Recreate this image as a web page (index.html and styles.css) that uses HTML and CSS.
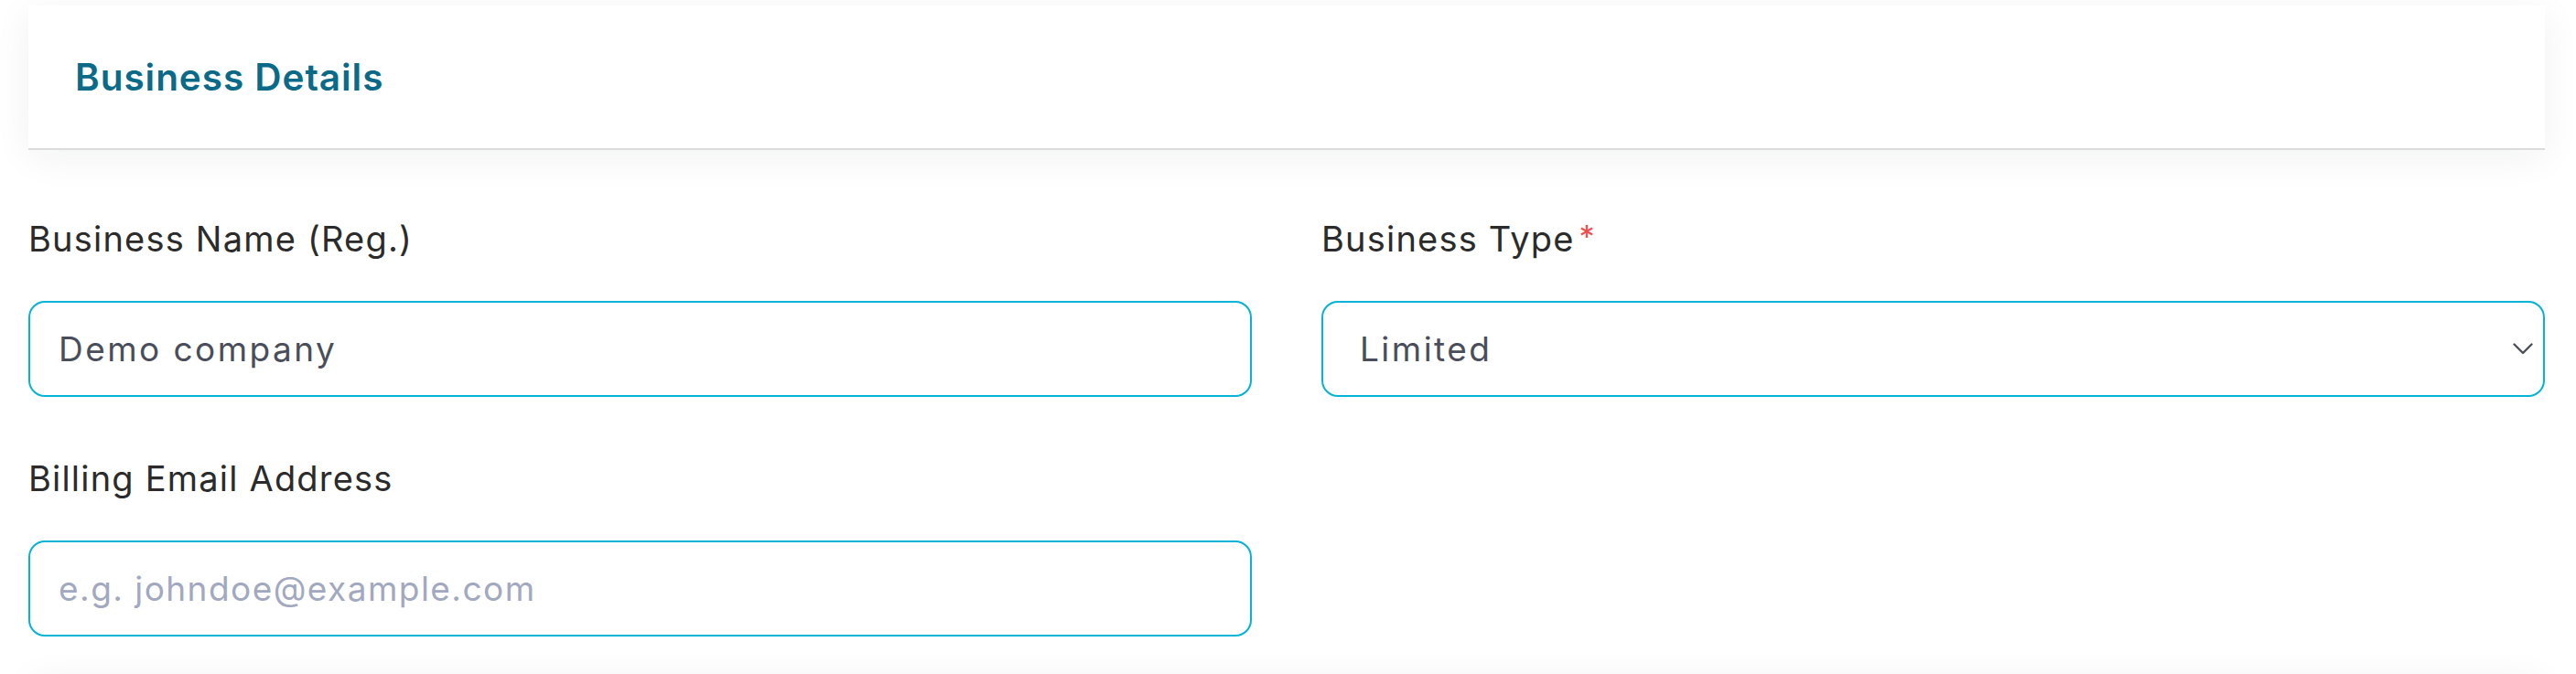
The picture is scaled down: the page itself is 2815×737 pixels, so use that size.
FILE: index.html
```html
<!DOCTYPE html>
<html lang="en">
<head>
<meta charset="utf-8">
<title>Business Details</title>
<link rel="stylesheet" href="styles.css">
</head>
<body>
<div class="page">
  <section class="card-header">
    <h2 class="title">Business Details</h2>
  </section>
  <form class="form">
    <div class="field">
      <label class="label" for="bname">Business Name (Reg.)</label>
      <input class="control" id="bname" type="text" value="Demo company">
    </div>
    <div class="field">
      <label class="label" for="btype">Business Type<span class="req">*</span></label>
      <div class="select-wrap">
        <select class="control select" id="btype">
          <option>Limited</option>
        </select>
        <svg class="chevron" width="22" height="13" viewBox="0 0 22 13" aria-hidden="true"><path d="M1.5 1.5 L11 11 L20.5 1.5" fill="none" stroke="#4b4f58" stroke-width="2.4" stroke-linecap="round" stroke-linejoin="round"/></svg>
      </div>
    </div>
    <div class="field">
      <label class="label" for="bemail">Billing Email Address</label>
      <input class="control" id="bemail" type="email" placeholder="e.g. johndoe@example.com">
    </div>
  </form>
  <section class="card-next"></section>
</div>
</body>
</html>
```
FILE: styles.css
```css
html, body {
  margin: 0;
  padding: 0;
  background: #ffffff;
}
.page {
  height: 737px;
  overflow: hidden;
  padding: 6px 34px 0 31px;
  box-sizing: border-box;
  font-family: "Inter", "Open Sans", sans-serif;
}
.card-header {
  height: 156px;
  background: #ffffff;
  border-bottom: 2px solid #dcdcdc;
  box-shadow: 0 8px 40px rgba(20, 30, 50, 0.06);
  display: flex;
  align-items: center;
  padding-left: 51px;
}
.title {
  margin: 0;
  font-size: 40.5px;
  font-weight: 600;
  color: #0b6a87;
  letter-spacing: 0.95px;
}
.form {
  display: grid;
  grid-template-columns: 1fr 1fr;
  column-gap: 76px;
  row-gap: 66px;
  padding-top: 74px;
}
.field {
  display: flex;
  flex-direction: column;
  gap: 44px;
}
.label {
  font-size: 38px;
  line-height: 47px;
  color: #2b2b2b;
  letter-spacing: 1.2px;
  display: flex;
  align-items: flex-start;
}
.req {
  color: #f04e4e;
  font-size: 34px;
  line-height: 34px;
  margin-left: 5px;
  margin-top: 4px;
  letter-spacing: 0;
}
.control {
  box-sizing: border-box;
  width: 100%;
  height: 105px;
  border: 2px solid #05b3d6;
  border-radius: 18px;
  background: #ffffff;
  padding: 0 30px 0 31px;
  font-family: "Inter", "Open Sans", sans-serif;
  font-size: 37px;
  color: #4a4e5a;
  letter-spacing: 2.45px;
  outline: none;
}
.control::placeholder {
  color: #a2a9bf;
  letter-spacing: 1.45px;
}
.select-wrap {
  position: relative;
}
.select {
  appearance: none;
  -webkit-appearance: none;
  padding-left: 40px;
}
.chevron {
  position: absolute;
  right: 13px;
  top: 46px;
  pointer-events: none;
}
.card-next {
  height: 300px;
  margin-top: 48px;
  background: #ffffff;
  border-radius: 18px;
  box-shadow: 0 0 40px rgba(20, 30, 50, 0.06);
}
```
